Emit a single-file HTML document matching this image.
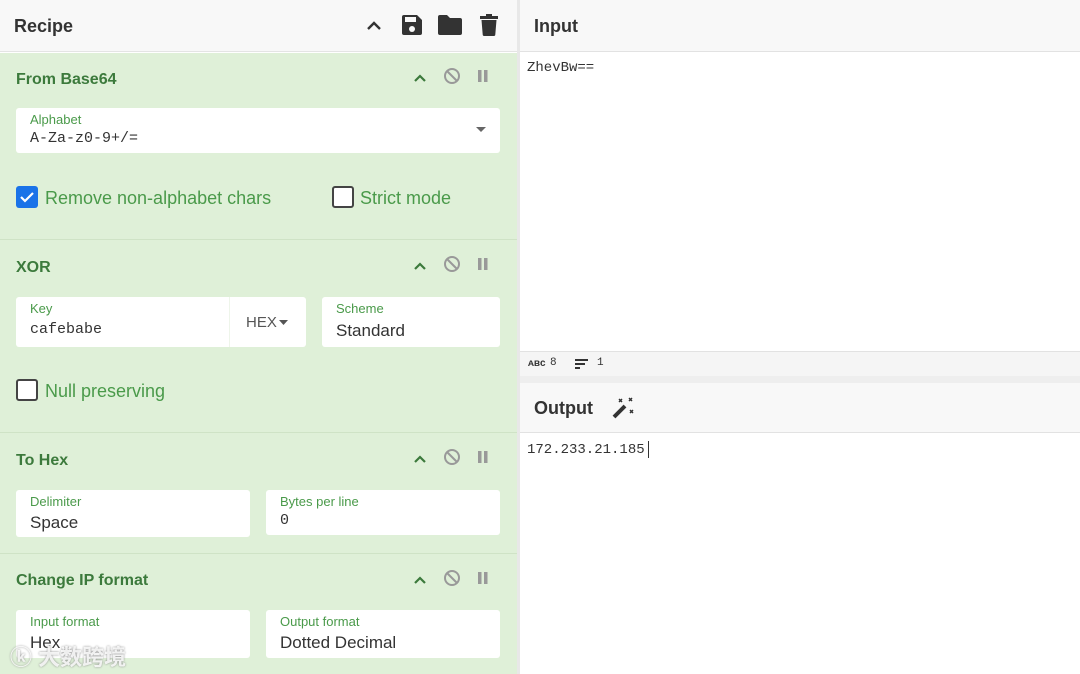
<!DOCTYPE html>
<html><head><meta charset="utf-8"><style>
*{box-sizing:border-box;margin:0;padding:0}
body{width:1080px;height:674px;overflow:hidden;background:#fff;font-family:"Liberation Sans","Noto Sans CJK SC",sans-serif;position:relative}
.a{position:absolute}
.hdr{font-weight:bold;font-size:18px;color:#333}
.green{background:#dff0d8}
.title{font-weight:bold;font-size:16px;color:#3c7a3c;position:absolute;left:16px}
.box{position:absolute;background:#fff;border-radius:3px}
.lbl{position:absolute;left:14px;top:4px;font-size:13px;color:#4a9a4a}
.val{position:absolute;left:14px;font-size:17px;color:#333}
.mono{font-family:"Liberation Mono",monospace;font-size:15px}
.ic{position:absolute;color:#444}
.sep{position:absolute;left:0;width:517px;height:1px;background:#cfe3c6}
.chk{position:absolute;width:22px;height:22px;border:2px solid #444;border-radius:3px;background:#fff}
.ck{font-size:18px;color:#4a9a4a;position:absolute}
</style></head><body>
<!-- left -->
<div class="a" style="left:0;top:0;width:517px;height:52px;background:#f8f8f8;border-bottom:1px solid #e4e4e4"></div>
<div class="a hdr" style="left:14px;top:16px">Recipe</div>
<svg class="a" style="left:364px;top:16px" width="20" height="20" viewBox="0 0 20 20"><path d="M4 13l6-6 6 6" stroke="#333" stroke-width="2.4" fill="none"/></svg>
<svg class="a" style="left:401px;top:14px" width="22" height="22" viewBox="0 0 22 22"><path d="M1 3a2 2 0 0 1 2-2h13l5 5v13a2 2 0 0 1-2 2H3a2 2 0 0 1-2-2z" fill="#333"/><rect x="4" y="3" width="11" height="5" fill="#f8f8f8"/><circle cx="11" cy="15" r="3" fill="#f8f8f8"/></svg>
<svg class="a" style="left:438px;top:15px" width="24" height="20" viewBox="0 0 24 20"><path d="M0 2a2 2 0 0 1 2-2h7l3 3h10a2 2 0 0 1 2 2v13a2 2 0 0 1-2 2H2a2 2 0 0 1-2-2z" fill="#333"/></svg>
<svg class="a" style="left:480px;top:14px" width="18" height="22" viewBox="0 0 18 22"><rect x="0" y="2" width="18" height="3" fill="#333"/><rect x="6" y="0" width="6" height="3" fill="#333"/><path d="M1.5 6h15l-1.2 14.5a1.5 1.5 0 0 1-1.5 1.5H4.2a1.5 1.5 0 0 1-1.5-1.5z" fill="#333"/></svg>

<div class="a green" style="left:0;top:53px;width:517px;height:621px"></div>
<div class="sep" style="top:239px"></div>
<div class="sep" style="top:432px"></div>
<div class="sep" style="top:553px"></div>

<!-- op icons generator -->
<div class="title" style="top:71px">From Base64</div>
<div class="title" style="top:259px">XOR</div>
<div class="title" style="top:452px">To Hex</div>
<div class="title" style="top:572px">Change IP format</div>

<svg class="a" style="left:410px;top:66px" width="90" height="22"><path d="M5 15l5-5 5 5" stroke="#3c7a3c" stroke-width="2.2" fill="none"/><circle cx="42" cy="10" r="7" stroke="#999" stroke-width="2" fill="none"/><path d="M37 5l10 10" stroke="#999" stroke-width="2"/><rect x="68" y="4" width="3.5" height="12" fill="#999"/><rect x="74" y="4" width="3.5" height="12" fill="#999"/></svg>
<svg class="a" style="left:410px;top:254px" width="90" height="22"><path d="M5 15l5-5 5 5" stroke="#3c7a3c" stroke-width="2.2" fill="none"/><circle cx="42" cy="10" r="7" stroke="#999" stroke-width="2" fill="none"/><path d="M37 5l10 10" stroke="#999" stroke-width="2"/><rect x="68" y="4" width="3.5" height="12" fill="#999"/><rect x="74" y="4" width="3.5" height="12" fill="#999"/></svg>
<svg class="a" style="left:410px;top:447px" width="90" height="22"><path d="M5 15l5-5 5 5" stroke="#3c7a3c" stroke-width="2.2" fill="none"/><circle cx="42" cy="10" r="7" stroke="#999" stroke-width="2" fill="none"/><path d="M37 5l10 10" stroke="#999" stroke-width="2"/><rect x="68" y="4" width="3.5" height="12" fill="#999"/><rect x="74" y="4" width="3.5" height="12" fill="#999"/></svg>
<svg class="a" style="left:410px;top:568px" width="90" height="22"><path d="M5 15l5-5 5 5" stroke="#3c7a3c" stroke-width="2.2" fill="none"/><circle cx="42" cy="10" r="7" stroke="#999" stroke-width="2" fill="none"/><path d="M37 5l10 10" stroke="#999" stroke-width="2"/><rect x="68" y="4" width="3.5" height="12" fill="#999"/><rect x="74" y="4" width="3.5" height="12" fill="#999"/></svg>

<div class="box" style="left:16px;top:108px;width:484px;height:45px"><div class="lbl">Alphabet</div><div class="val mono" style="top:22px">A-Za-z0-9+/=</div>
<svg class="a" style="left:460px;top:19px" width="10" height="6"><path d="M0 0h10L5 5z" fill="#666"/></svg></div>

<div class="a" style="left:16px;top:186px;width:22px;height:22px;background:#1a73e8;border-radius:3px"></div>
<svg class="a" style="left:18px;top:188px" width="18" height="18"><path d="M3 9l4 4 8-8" stroke="#fff" stroke-width="2.2" fill="none"/></svg>
<div class="ck" style="left:45px;top:188px">Remove non-alphabet chars</div>
<div class="chk" style="left:332px;top:186px"></div>
<div class="ck" style="left:360px;top:188px">Strict mode</div>

<div class="box" style="left:16px;top:297px;width:290px;height:50px;border-radius:3px"><div class="lbl">Key</div><div class="val mono" style="top:24px">cafebabe</div></div>
<div class="a" style="left:229px;top:297px;width:1px;height:50px;background:#eef5ea"></div>
<div class="a" style="left:246px;top:314px;font-size:15px;color:#555">HEX</div>
<svg class="a" style="left:279px;top:320px" width="9" height="5"><path d="M0 0h9L4.5 5z" fill="#555"/></svg>
<div class="box" style="left:322px;top:297px;width:178px;height:50px"><div class="lbl">Scheme</div><div class="val" style="top:24px">Standard</div></div>

<div class="chk" style="left:16px;top:379px"></div>
<div class="ck" style="left:45px;top:381px">Null preserving</div>

<div class="box" style="left:16px;top:490px;width:234px;height:47px"><div class="lbl">Delimiter</div><div class="val" style="top:23px">Space</div></div>
<div class="box" style="left:266px;top:490px;width:234px;height:45px"><div class="lbl">Bytes per line</div><div class="val mono" style="top:22px">0</div></div>

<div class="box" style="left:16px;top:610px;width:234px;height:48px"><div class="lbl">Input format</div><div class="val" style="top:23px">Hex</div></div>
<div class="box" style="left:266px;top:610px;width:234px;height:48px"><div class="lbl">Output format</div><div class="val" style="top:23px">Dotted Decimal</div></div>
<div class="a" style="left:10px;top:640px;font-size:22px;color:rgba(255,255,255,.85);font-weight:bold;text-shadow:0 0 2px #888">ⓚ 大数跨境</div>

<!-- divider -->
<div class="a" style="left:517px;top:0;width:3px;height:674px;background:#e8e8e8"></div>

<!-- right -->
<div class="a" style="left:520px;top:0;width:560px;height:52px;background:#f8f8f8;border-bottom:1px solid #e2e2e2"></div>
<div class="a hdr" style="left:534px;top:16px">Input</div>
<div class="a" style="left:527px;top:60px;font-family:'Liberation Mono',monospace;font-size:14px;color:#333">ZhevBw==</div>
<div class="a" style="left:520px;top:351px;width:560px;height:25px;background:#f5f5f5;border-top:1px solid #e2e2e2"></div>
<div class="a" style="left:528px;top:358px;font-size:10px;color:#333;font-weight:bold">ᴀʙᴄ</div>
<div class="a" style="left:550px;top:357px;font-size:11px;color:#333;font-family:'Liberation Mono',monospace">8</div>
<svg class="a" style="left:575px;top:359px" width="14" height="10"><path d="M0 1h13M0 5h10M0 9h5" stroke="#333" stroke-width="2"/></svg>
<div class="a" style="left:597px;top:357px;font-size:11px;color:#333;font-family:'Liberation Mono',monospace">1</div>
<div class="a" style="left:520px;top:376px;width:560px;height:7px;background:#eee"></div>
<div class="a" style="left:520px;top:383px;width:560px;height:50px;background:#f8f8f8;border-bottom:1px solid #e2e2e2"></div>
<div class="a hdr" style="left:534px;top:398px">Output</div>
<svg class="a" style="left:611px;top:396px" width="24" height="24"><path d="M3 21L14 10" stroke="#333" stroke-width="4"/><path d="M8 3l3 3M11 3l-3 3M18 2l3 3M21 2l-3 3M19 14l3 3M22 14l-3 3" stroke="#333" stroke-width="1.5"/></svg>
<div class="a" style="left:527px;top:442px;font-family:'Liberation Mono',monospace;font-size:14px;color:#333">172.233.21.185</div>
<div class="a" style="left:648px;top:441px;width:1px;height:17px;background:#333"></div>
</body></html>
